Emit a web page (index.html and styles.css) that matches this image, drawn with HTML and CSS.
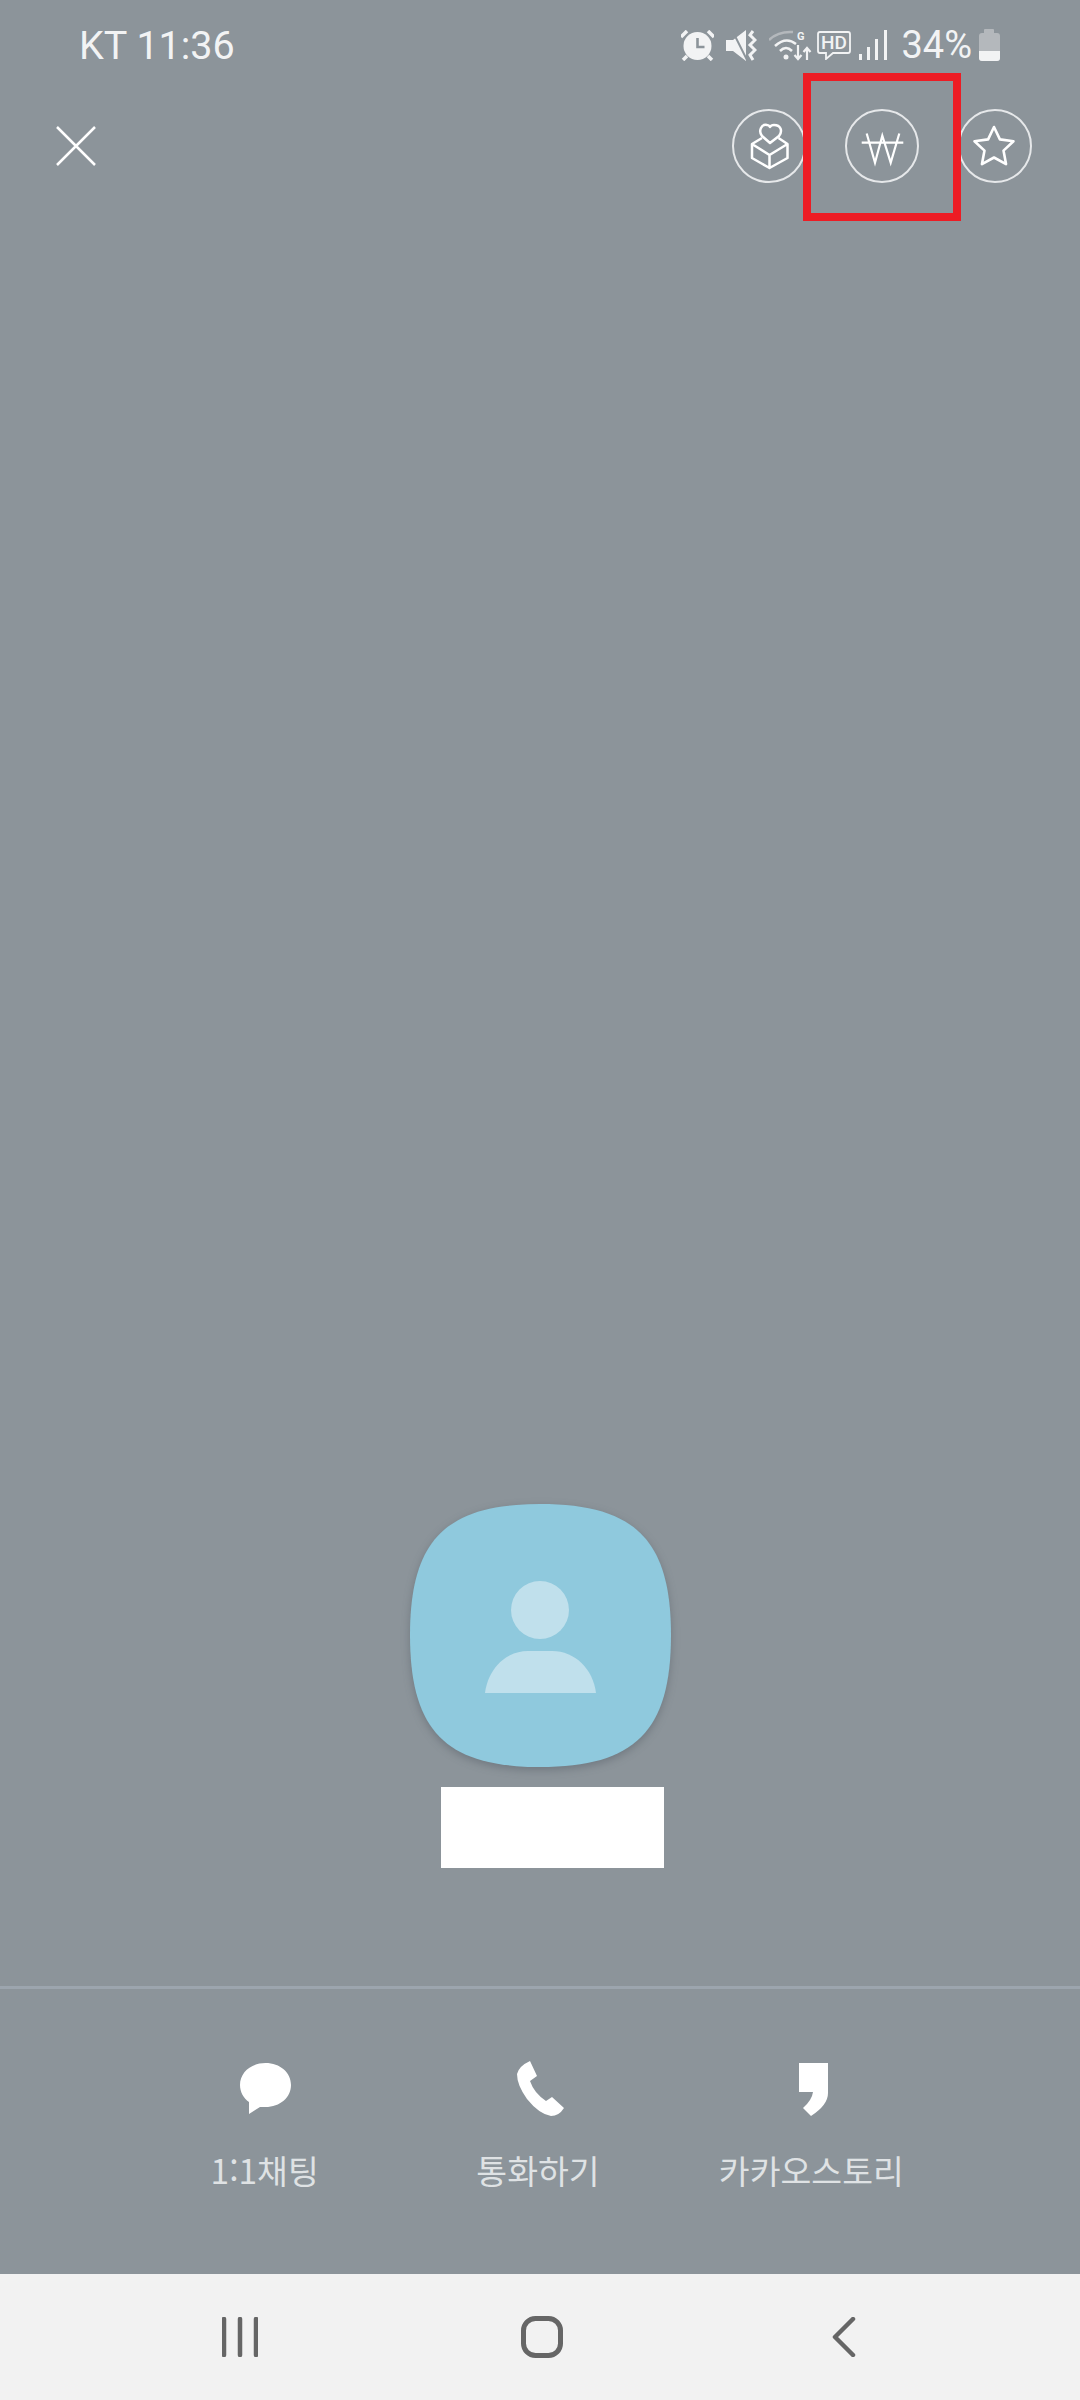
FILE: index.html
```html
<!DOCTYPE html>
<html lang="ko">
<head>
  <meta charset="UTF-8">
  <title>프로필</title>
  <link rel="stylesheet" href="styles.css">
</head>
<body>
  <div class="screen">
    <div class="status-bar">
      <span class="status-text">KT 11:36</span>
      <div class="status-icons">
        <svg class="ic-alarm" width="33" height="31" viewBox="0 0 33 31">
          <circle cx="16.5" cy="16" r="14" fill="#f2f3f4"/>
          <path d="M16.5 8v9h7" fill="none" stroke="#8c949a" stroke-width="2.6"/>
          <path d="M0 7l6-6M33 7l-6-6M6 26l-4 4M27 26l4 4" stroke="#f2f3f4" stroke-width="3.500" fill="none"/>
        </svg>
        <svg class="ic-mute" width="31" height="31" viewBox="0 0 31 31">
          <path d="M0 10h7l13-10v31L7 21H0z" fill="#f2f3f4"/>
          <path d="M6 0l15 30" stroke="#8c949a" stroke-width="2"/>
          <path d="M27 1l-3 4 5 5-5 5 5 5-5 5 3 5" fill="none" stroke="#f2f3f4" stroke-width="3"/>
        </svg>
        <svg class="ic-wifi" width="43" height="33" viewBox="0 0 43 33">
          <path d="M0 11Q9 2 24 3" fill="none" stroke="#b4b8bc" stroke-width="2.500"/>
          <path d="M6 17Q17 7 27 15" fill="none" stroke="#f2f3f4" stroke-width="2.500"/>
          <path d="M11 22Q17 16 23 22" fill="none" stroke="#f2f3f4" stroke-width="2.500"/>
          <circle cx="17" cy="28" r="2.500" fill="#f2f3f4"/>
          <text x="28" y="11" class="ic-small-text">G</text>
          <path d="M29 16v14M25.500 26l3.500 4 3.500-4M38 31V19M34.500 23l3.500-4 3.500 4" fill="none" stroke="#f2f3f4" stroke-width="2.200"/>
        </svg>
        <svg class="ic-hd" width="34" height="29" viewBox="0 0 34 29">
          <path d="M3 1h28q2 0 2 2v17q0 2-2 2H16l-7 6v-6H3q-2 0-2-2V3q0-2 2-2z" fill="none" stroke="#f2f3f4" stroke-width="1.800"/>
          <text x="17" y="18" text-anchor="middle" class="ic-hd-text">HD</text>
        </svg>
        <svg class="ic-signal" width="28" height="30" viewBox="0 0 28 30">
          <rect x="0" y="24" width="3" height="6" fill="#f2f3f4"/>
          <rect x="8" y="17" width="3" height="13" fill="#f2f3f4"/>
          <rect x="16" y="9" width="3" height="21" fill="#f2f3f4"/>
          <rect x="25" y="0" width="3" height="30" fill="#f2f3f4"/>
        </svg>
        <span class="status-text battery-text">34%</span>
        <div class="battery"><div class="battery-level"></div></div>
      </div>
    </div>

    <div class="top-bar">
      <svg class="close" width="40" height="40" viewBox="0 0 40 40">
        <path d="M1 1l38 38M39 1L1 39" stroke="#fff" stroke-width="2.500" fill="none"/>
      </svg>
      <div class="top-actions">
        <div class="circle-btn">
          <svg width="74" height="74" viewBox="0 0 74 74" fill="none" stroke="#fff" stroke-width="2.500" stroke-linejoin="round">
            <path d="M38 34l-8-7q-3-4-1-8t6-3q2 0 3 2 1-2 4-2 5 0 6.500 3.500t-1.500 7.500z"/>
            <path d="M30 29l-10 6v14l17.500 10L55.500 49V35l-9-6M20 35l17.500 11L55.500 35M37.500 46v13"/>
          </svg>
        </div>
        <div class="circle-btn">
          <svg width="74" height="74" viewBox="0 0 74 74" fill="none" stroke="#fff" stroke-width="2.200">
            <path d="M21.700 24.500L30 53.700l7.300-27 8.400 27 8.600-29.200M16.700 33.700h41.600"/>
          </svg>
        </div>
        <div class="circle-btn">
          <svg width="74" height="74" viewBox="0 0 74 74" fill="none" stroke="#fff" stroke-width="2.600" stroke-linejoin="round">
            <path d="M36 18l5.900 12.400 13.600 1.800-10 9.400 2.550 13.500L36 48.500l-12.050 6.600 2.550-13.500-10-9.400 13.600-1.800z"/>
          </svg>
        </div>
      </div>
    </div>

    <div class="spacer"></div>

    <div class="profile">
      <svg class="avatar" width="261" height="263" viewBox="0 0 261 263">
        <path d="M130 0C225 0 261 36 261 131C261 227 225 263 130 263C36 263 0 227 0 131C0 36 36 0 130 0Z" fill="#8fc9dd"/>
        <circle cx="130" cy="106" r="29" fill="#c0e0ec"/>
        <path d="M75 189C78 165 96 147 118 147H142C165 147 183 165 186 189Z" fill="#c0e0ec"/>
      </svg>
      <div class="name-mask"></div>
    </div>

    <div class="divider"></div>

    <div class="actions">
      <div class="action">
        <div class="action-icon">
          <svg class="icon-chat" width="51" height="51" viewBox="0 0 51 51">
            <path d="M25.500 0C40 0 51 9.500 51 22S40 44 25.500 44H20L9 51V39C3.500 35 0 29 0 22 0 9.500 11 0 25.500 0Z" fill="#fff"/>
          </svg>
        </div>
        <span class="action-label">1:1채팅</span>
      </div>
      <div class="action">
        <div class="action-icon">
          <svg class="icon-call" width="47" height="55" viewBox="0 0 47 55">
            <path d="M13 0L20 15L13 20Q17 32 29 40L35 36L47 47Q42 55 34 55Q22 53 10 38Q0 24 0 13Q2 5 13 0Z" fill="#fff"/>
          </svg>
        </div>
        <span class="action-label">통화하기</span>
      </div>
      <div class="action">
        <div class="action-icon">
          <svg class="icon-story" width="29" height="53" viewBox="0 0 29 53">
            <path d="M0 0H29V30Q29 42 12 53L4 45Q13 37 14 29H0Z" fill="#fff"/>
          </svg>
        </div>
        <span class="action-label">카카오스토리</span>
      </div>
    </div>

    <div class="nav-bar">
      <div class="nav-item">
        <svg width="36" height="40" viewBox="0 0 36 40" fill="none" stroke="#666" stroke-width="4.500" stroke-linecap="round">
          <path d="M2 2v36M18 2v36M34 2v36"/>
        </svg>
      </div>
      <div class="nav-item">
        <svg width="42" height="42" viewBox="0 0 42 42">
          <rect x="2.500" y="2.500" width="37" height="37" rx="12" fill="none" stroke="#666" stroke-width="5"/>
        </svg>
      </div>
      <div class="nav-item">
        <svg width="24" height="40" viewBox="0 0 24 40" fill="none" stroke="#666" stroke-width="4.500" stroke-linecap="round" stroke-linejoin="round">
          <path d="M21 2L3 20l18 18"/>
        </svg>
      </div>
    </div>

    <div class="annotation"></div>
  </div>
</body>
</html>
```

FILE: styles.css
```css
* {
  box-sizing: border-box;
}

body {
  margin: 0;
  font-family: Roboto, "Noto Sans CJK KR", sans-serif;
}

.screen {
  position: relative;
  width: 1080px;
  height: 2400px;
  display: flex;
  flex-direction: column;
  background-color: #8c949a;
  overflow: hidden;
}

.status-bar {
  height: 90px;
  padding: 0 80px 0 79px;
  display: flex;
  align-items: center;
  justify-content: space-between;
}

.status-text {
  font-size: 39.500px;
  color: #f2f3f4;
}

.status-icons {
  display: flex;
  align-items: center;
}

.battery-text {
  font-size: 38px;
  margin-left: 14px;
}

.ic-mute,
.ic-wifi {
  margin-left: 12px;
}

.ic-hd {
  margin-left: 5px;
}

.ic-signal {
  margin-left: 8px;
}

.ic-small-text {
  font-size: 11px;
  font-weight: 700;
  fill: #f2f3f4;
}

.ic-hd-text {
  font-size: 19px;
  font-weight: 500;
  fill: #f2f3f4;
}

.battery {
  position: relative;
  width: 21px;
  height: 28px;
  margin-top: 4px;
  margin-left: 7px;
  border-radius: 3px;
  background-color: #b4b8bc;
  display: flex;
  align-items: flex-end;
}

.battery::before {
  content: "";
  position: absolute;
  left: 5px;
  top: -4px;
  width: 10px;
  height: 4px;
  border-radius: 1px 1px 0 0;
  background-color: #b4b8bc;
}

.battery-level {
  width: 100%;
  height: 36%;
  border-radius: 0 0 3px 3px;
  background-color: #f2f3f4;
}

.top-bar {
  height: 110px;
  padding: 2px 48px 0 56px;
  display: flex;
  align-items: center;
  justify-content: space-between;
}

.top-actions {
  display: flex;
  gap: 39px;
}

.circle-btn {
  width: 74px;
  height: 74px;
  border: 2.500px solid #e6e8ea;
  border-radius: 50%;
  display: flex;
  align-items: center;
  justify-content: center;
}

.circle-btn svg {
  flex: none;
}

.spacer {
  flex: 1;
}

.profile {
  display: flex;
  flex-direction: column;
  align-items: center;
  padding-bottom: 118px;
}

.avatar {
  filter: drop-shadow(0 3px 4px rgba(60, 70, 80, 0.35));
}

.name-mask {
  width: 223px;
  height: 81px;
  margin-top: 20px;
  margin-left: 24px;
  background-color: #fff;
}

.divider {
  height: 3px;
  background-color: #9ca5ae;
}

.actions {
  height: 285px;
  padding: 69px 132px 0 128px;
  display: grid;
  grid-template-columns: repeat(3, 1fr);
}

.action {
  display: flex;
  flex-direction: column;
  align-items: center;
}

.action-icon {
  height: 60px;
  display: flex;
  align-items: center;
  justify-content: center;
}

.icon-chat {
  margin-left: 2px;
}

.icon-call {
  margin-left: 6px;
}

.icon-story {
  margin-left: 4px;
  margin-top: 3px;
}

.action-label {
  margin-top: 30px;
  font-family: "Noto Sans CJK KR", sans-serif;
  font-size: 33.500px;
  line-height: 44px;
  color: #dfe2e4;
}

.nav-bar {
  height: 126px;
  padding: 0 85px 0 89px;
  display: grid;
  grid-template-columns: repeat(3, 1fr);
  background-color: #f2f2f2;
}

.nav-item {
  display: flex;
  align-items: center;
  justify-content: center;
}

/* red highlight box drawn over the screenshot */
.annotation {
  position: absolute;
  left: 803px;
  top: 73px;
  width: 158px;
  height: 148px;
  border: 8px solid #ed1c24;
  background-color: transparent;
}
```
